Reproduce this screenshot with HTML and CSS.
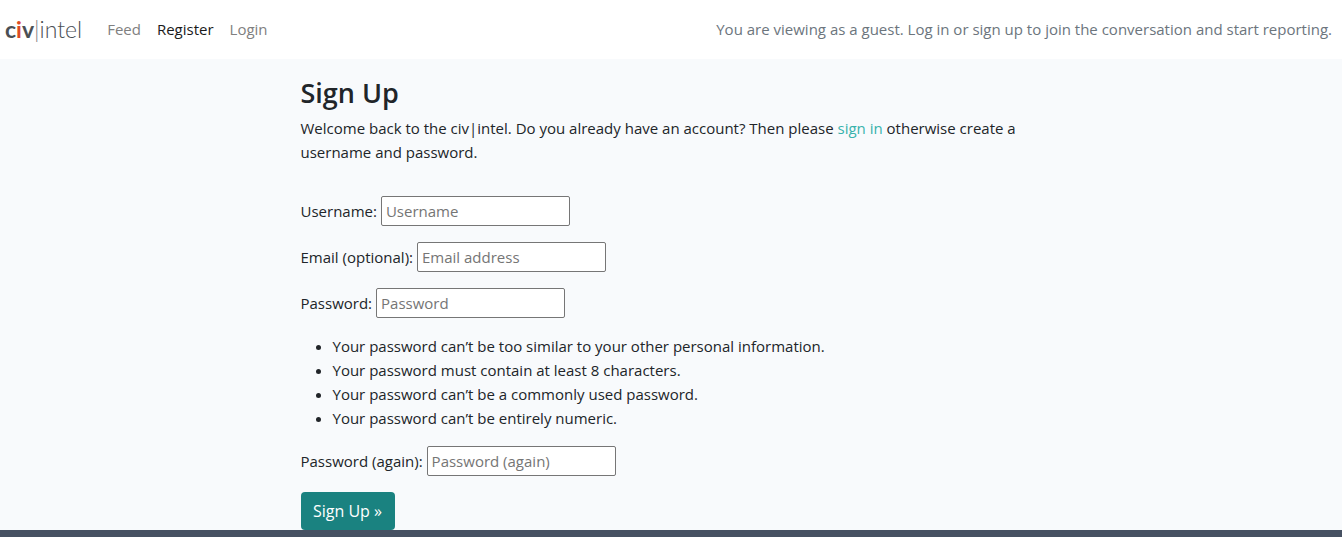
FILE: index.html
```html
<!DOCTYPE html>
<html lang="en">
<head>
<meta charset="utf-8">
<title>civ|intel – Sign Up</title>
<link rel="stylesheet" href="styles.css">
</head>
<body>
<header class="navbar">
  <a class="brand" href="#"><b>c<span class="brand-accent">i</span>v</b><span class="brand-bar">|</span>intel</a>
  <nav class="nav">
    <a href="#">Feed</a>
    <a class="active" href="#">Register</a>
    <a href="#">Login</a>
  </nav>
  <span class="notice">You are viewing as a guest. Log in or sign up to join the conversation and start reporting.</span>
</header>
<main class="content">
  <h1>Sign Up</h1>
  <p class="intro">Welcome back to the civ|intel. Do you already have an account? Then please <a href="#">sign in</a> otherwise create a username and password.</p>
  <form class="form">
    <div class="field"><label for="username">Username:</label><input id="username" type="text" placeholder="Username"></div>
    <div class="field"><label for="email">Email (optional):</label><input id="email" type="email" placeholder="Email address"></div>
    <div class="field"><label for="password">Password:</label><input id="password" type="password" placeholder="Password"></div>
    <ul class="rules">
      <li>Your password can’t be too similar to your other personal information.</li>
      <li>Your password must contain at least 8 characters.</li>
      <li>Your password can’t be a commonly used password.</li>
      <li>Your password can’t be entirely numeric.</li>
    </ul>
    <div class="field"><label for="again">Password (again):</label><input id="again" type="password" placeholder="Password (again)"></div>
    <button class="submit" type="submit">Sign Up »</button>
  </form>
</main>
<footer class="footer"></footer>
</body>
</html>
```
FILE: styles.css
```css
* { box-sizing: border-box; }
body {
  margin: 0;
  min-height: 100vh;
  display: flex;
  flex-direction: column;
  background: #f8fafc;
  color: #212529;
  font: 15px/24px "Open Sans", sans-serif;
}
a { color: #38b2ac; text-decoration: none; }
.navbar {
  display: flex;
  align-items: center;
  min-height: 59px;
  padding: 0 10px 2px 5px;
  background: #fff;
}
.brand {
  margin-right: 17px;
  color: #4a4f54;
  font: 300 23px/32px Lato, sans-serif;
}
.brand b { font-weight: 700; }
.brand-accent { color: #dd4b25; }
.brand-bar { color: #808080; }
.nav { display: flex; }
.nav a { padding: 8px; color: #808080; }
.nav .active { color: #1a1a1a; }
.notice { margin-left: auto; color: #6c757d; }
.content {
  width: 100%;
  max-width: 771px;
  margin: 0 auto;
  padding: 17px 15px 0;
}
h1 { margin: 0 0 6px; font-size: 27px; line-height: 34px; font-weight: 600; }
.intro { margin: 0 0 32px; }
.field { display: flex; align-items: center; gap: 4px; margin-bottom: 16px; }
.field input {
  width: 189px;
  height: 30px;
  padding: 1px 4px;
  border: 1px solid #767676;
  border-radius: 2px;
  background: #fff;
  font: inherit;
}
.field input::placeholder { color: #757575; }
.rules { margin: 0 0 16px; padding-left: 32px; }
.submit {
  display: block;
  min-width: 94px;
  height: 38px;
  padding: 6px 12px;
  border: 0;
  border-radius: 4px;
  background: #1a8280;
  color: #fff;
  font: inherit;
  font-size: 16px;
}
.footer { flex: 1; min-height: 7px; background: #465162; }
```
